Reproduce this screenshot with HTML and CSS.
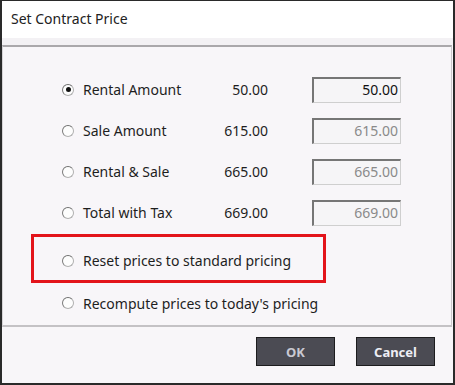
FILE: index.html
```html
<!DOCTYPE html>
<html lang="en">
  <head>
    <meta charset="UTF-8" />
    <title>Set Contract Price</title>
    <link rel="stylesheet" href="styles.css">
  </head>
  <body>
    <div class="window">
      <div class="titlebar">Set Contract Price</div>
      <div class="band"></div>
      <div class="panel">
        <div class="row">
          <span class="radio checked"></span>
          <span class="label">Rental Amount</span>
          <span class="value">50.00</span>
          <span class="field active">50.00</span>
        </div>
        <div class="row">
          <span class="radio"></span>
          <span class="label">Sale Amount</span>
          <span class="value">615.00</span>
          <span class="field">615.00</span>
        </div>
        <div class="row">
          <span class="radio"></span>
          <span class="label">Rental &amp; Sale</span>
          <span class="value">665.00</span>
          <span class="field">665.00</span>
        </div>
        <div class="row">
          <span class="radio"></span>
          <span class="label">Total with Tax</span>
          <span class="value">669.00</span>
          <span class="field">669.00</span>
        </div>
        <div class="highlight">
          <span class="radio"></span>
          <span class="label">Reset prices to standard pricing</span>
        </div>
        <div class="row short">
          <span class="radio"></span>
          <span class="label">Recompute prices to today's pricing</span>
        </div>
      </div>
      <div class="footer">
        <button class="btn ok">OK</button>
        <button class="btn cancel">Cancel</button>
      </div>
    </div>
  </body>
</html>
```

FILE: styles.css
```css
body {
  margin: 0;
  font-family: "Noto Sans", "Open Sans", sans-serif;
  font-size: 14px;
  color: #1e1e1e;
}
.window {
  box-sizing: border-box;
  width: 455px;
  height: 385px;
  border: 1px solid #2a2a2a;
  border-width: 1px 2px 2px 2px;
  background-color: #f8f6f9;
  display: flex;
  flex-direction: column;
}
.titlebar {
  height: 37px;
  line-height: 36px;
  padding-left: 9px;
  background-color: #ffffff;
  color: #222;
}
.band {
  height: 7px;
  background-color: #f3f1f4;
}
.panel {
  box-sizing: border-box;
  height: 282px;
  margin-right: 1px;
  border-top: 2px solid #aaa8ab;
  border-left: 1px solid #d6d4d7;
  border-right: 1px solid #c9c7ca;
  border-bottom: 2px solid #c4c2c5;
  padding-top: 22px;
}
.row {
  display: flex;
  align-items: center;
  height: 41px;
  padding-left: 59px;
}
.row.short {
  height: 40px;
}
.radio {
  box-sizing: border-box;
  width: 12px;
  height: 12px;
  border-radius: 50%;
  border: 1px solid #b0b0b0;
  border-top-color: #6f6f6f;
  border-left-color: #7a7a7a;
  background-color: #fdfdfd;
  display: flex;
  align-items: center;
  justify-content: center;
  flex-shrink: 0;
}
.radio.checked::after {
  content: "";
  width: 5px;
  height: 5px;
  border-radius: 50%;
  background-color: #111;
}
.label {
  margin-left: 9px;
  width: 130px;
  white-space: nowrap;
}
.value {
  width: 55px;
  text-align: right;
}
.field {
  box-sizing: border-box;
  width: 89px;
  height: 26px;
  margin-left: 44px;
  padding-right: 2px;
  line-height: 22px;
  text-align: right;
  color: #8a8a8a;
  background-color: #f6f5f7;
  border: 1px solid #cfcfcf;
  border-top: 2px solid #767676;
  border-left: 2px solid #767676;
}
.field.active {
  color: #111;
}
.highlight {
  box-sizing: border-box;
  display: flex;
  align-items: center;
  width: 295px;
  height: 49px;
  margin: 1px 0 0 28px;
  padding: 4px 0 0 28px;
  border: 3px solid #e3141b;
}
.footer {
  display: flex;
  justify-content: flex-end;
  gap: 21px;
  padding: 10px 18px 0 0;
}
.btn {
  box-sizing: border-box;
  width: 79px;
  height: 29px;
  border: 1px solid #1c1c1e;
  background-color: #4b4b53;
  color: #eeeef4;
  font-family: "Noto Sans", "Open Sans", sans-serif;
  font-size: 13px;
  font-weight: bold;
  padding: 0;
}
.btn.ok {
  color: #c9c9d2;
}
```
